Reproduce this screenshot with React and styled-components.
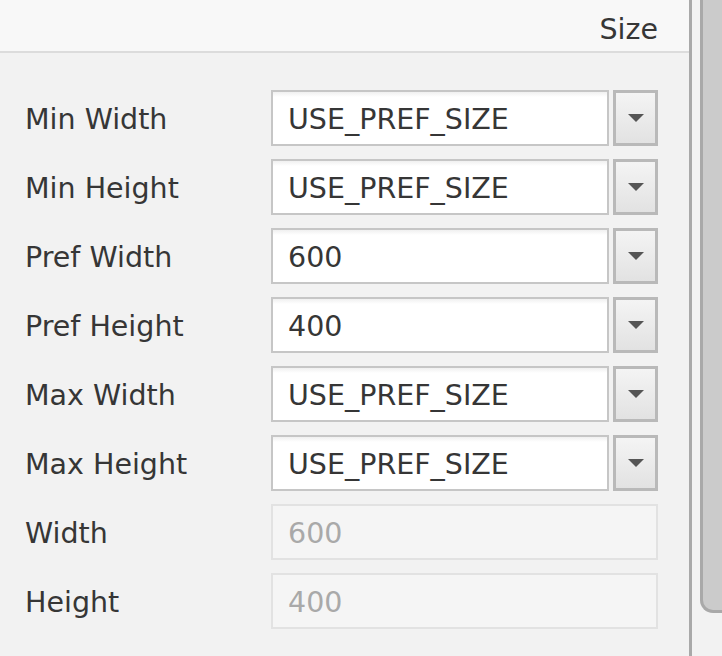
import React from "react";
import styled, { createGlobalStyle } from "styled-components";

const Global = createGlobalStyle`
  html, body { margin: 0; padding: 0; height: 656px; overflow: hidden; background: #f2f2f2; }
  #root { height: 656px; }
`;

const Frame = styled.div`
  display: flex;
  height: 656px;
  width: 722px;
  overflow: hidden;
  font-family: "DejaVu Sans", "Liberation Sans", sans-serif;
  color: #363636;
  background: #f2f2f2;
`;

const Panel = styled.div`
  width: 689px;
  flex: none;
  display: flex;
  flex-direction: column;
`;

const Header = styled.div`
  height: 53px;
  background: #f8f8f8;
  border-bottom: 2px solid #dcdcdc;
  display: flex;
  align-items: center;
  justify-content: flex-end;
  padding: 7px 31px 0 0;
  box-sizing: border-box;
  font-size: 28.5px;
  color: #363636;
`;

const Form = styled.div`
  display: grid;
  grid-template-columns: 246px 387px;
  grid-auto-rows: 56px;
  row-gap: 13px;
  padding: 37px 0 0 25px;
`;

const Label = styled.div`
  display: flex;
  align-items: center;
  font-size: 28.5px;
  color: #363636;
  padding-top: 2px;
`;

const Combo = styled.div`
  display: flex;
  gap: 4px;
`;

const Field = styled.div`
  flex: 1;
  box-sizing: border-box;
  height: 56px;
  border: 2px solid ${(p) => (p.$disabled ? "#e2e2e2" : "#c6c6c6")};
  background: ${(p) =>
    p.$disabled ? "#f5f5f5" : "linear-gradient(#f0f0f0 0px, #ffffff 5px)"};
  color: ${(p) => (p.$disabled ? "#a9a9a9" : "#363636")};
  display: flex;
  align-items: center;
  padding: 2px 0 0 15px;
  font-size: 28.5px;
`;

const DropButton = styled.div`
  width: 45px;
  height: 56px;
  box-sizing: border-box;
  border: 3px solid #b9b9b9;
  background: linear-gradient(#f4f4f4, #e2e2e2);
  display: flex;
  align-items: center;
  justify-content: center;
`;

const Divider = styled.div`
  width: 3px;
  flex: none;
  background: #a9a9a9;
`;

const ScrollTrack = styled.div`
  flex: 1;
  display: flex;
  padding-left: 8px;
  background: #f2f2f2;
`;

const Thumb = styled.div`
  width: 40px;
  height: 613px;
  box-sizing: border-box;
  background: #cbcbcb;
  border-left: 3px solid #a9a9a9;
  border-bottom: 3px solid #a9a9a9;
  border-bottom-left-radius: 13px;
`;

const Arrow = () => (
  <svg width="18" height="10" viewBox="0 0 18 10">
    <polygon points="1,1 17,1 9,9" fill="#555" />
  </svg>
);

const rows = [
  ["Min Width", "USE_PREF_SIZE", false],
  ["Min Height", "USE_PREF_SIZE", false],
  ["Pref Width", "600", false],
  ["Pref Height", "400", false],
  ["Max Width", "USE_PREF_SIZE", false],
  ["Max Height", "USE_PREF_SIZE", false],
  ["Width", "600", true],
  ["Height", "400", true],
];

export default function App() {
  return (
    <>
      <Global />
      <Frame>
        <Panel>
          <Header>Size</Header>
          <Form>
            {rows.map(([label, value, disabled]) => (
              <React.Fragment key={label}>
                <Label>{label}</Label>
                {disabled ? (
                  <Field $disabled>{value}</Field>
                ) : (
                  <Combo>
                    <Field>{value}</Field>
                    <DropButton>
                      <Arrow />
                    </DropButton>
                  </Combo>
                )}
              </React.Fragment>
            ))}
          </Form>
        </Panel>
        <Divider />
        <ScrollTrack>
          <Thumb />
        </ScrollTrack>
      </Frame>
    </>
  );
}
